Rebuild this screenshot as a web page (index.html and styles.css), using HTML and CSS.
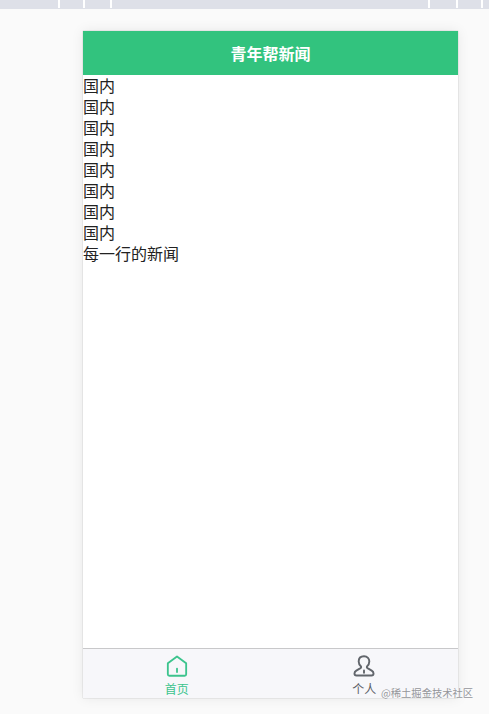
FILE: index.html
```html
<!DOCTYPE html>
<html lang="zh-CN">
  <head>
    <meta charset="utf-8" />
    <meta name="viewport" content="width=device-width, initial-scale=1" />
    <title>青年帮新闻</title>
    <link rel="stylesheet" href="styles.css">
  </head>
  <body>
    <div class="top-strip"></div>

    <!-- Phone preview -->
    <div class="phone">
      <div class="nav-bar">青年帮新闻</div>

      <div class="content">
        <div>国内</div>
        <div>国内</div>
        <div>国内</div>
        <div>国内</div>
        <div>国内</div>
        <div>国内</div>
        <div>国内</div>
        <div>国内</div>
        <div>每一行的新闻</div>
      </div>

      <div class="tab-bar">
        <div class="tab tab-active">
          <svg class="tab-icon" viewBox="0 0 24 24" fill="none" stroke="#3cc48d" stroke-width="2" stroke-linejoin="round" stroke-linecap="round">
            <path d="M12 1.6 L22 9 V21 Q22 22.6 20.4 22.6 H3.6 Q2 22.6 2 21 V9 Z" />
            <path d="M12 14.8 V18.6" />
          </svg>
          <span class="tab-label">首页</span>
        </div>
        <div class="tab">
          <svg class="tab-icon" viewBox="0 0 24 24" fill="none" stroke="#62666c" stroke-width="2.1" stroke-linejoin="round" stroke-linecap="round">
            <path d="M12 1.4 C8.2 1.4 6.2 4 6.2 7.2 C6.2 9.8 7.6 11.6 8.8 12.6 C9.2 13.6 8.4 14.4 6.8 15.2 L3.6 17 C2.4 17.7 1.6 18.8 1.6 20.2 C1.6 21.6 2.4 22.4 3.8 22.4 H20.2 C21.6 22.4 22.4 21.6 22.4 20.2 C22.4 18.8 21.6 17.7 20.4 17 L17.2 15.2 C15.6 14.4 14.8 13.6 15.2 12.6 C16.4 11.6 17.8 9.8 17.8 7.2 C17.8 4 15.8 1.4 12 1.4 Z" />
            <path d="M12 16.8 V19.4" />
          </svg>
          <span class="tab-label">个人</span>
        </div>
      </div>
    </div>

    <div class="watermark">@稀土掘金技术社区</div>
  </body>
</html>
```

FILE: styles.css
```css
body {
  margin: 0;
  height: 714px;
  overflow: hidden;
  position: relative;
  background: #fafafa;
  font-family: "Noto Sans CJK SC", "Noto Sans", sans-serif;
  color: #222;
}

.top-strip {
  height: 9px;
  background-color: #dee0e8;
  background-image: linear-gradient(90deg,
    transparent 58px, #fff 58px, #fff 60px,
    transparent 60px, transparent 83px, #fff 83px, #fff 85px,
    transparent 85px, transparent 110px, #fff 110px, #fff 112px,
    transparent 112px, transparent 428px, #fff 428px, #fff 430px,
    transparent 430px, transparent 456px, #fff 456px, #fff 458px,
    transparent 458px, transparent 481px, #fff 481px, #fff 483px,
    transparent 483px);
  background-size: 100% 8px;
  background-repeat: no-repeat;
}

.phone {
  width: 375px;
  height: 667px;
  margin: 22px 0 0 83px;
  display: flex;
  flex-direction: column;
  background: #fff;
  box-shadow: 0 0 12px rgba(0, 0, 0, 0.08), 0 0 1px rgba(0, 0, 0, 0.3);
}

.nav-bar {
  height: 44px;
  flex: none;
  display: flex;
  align-items: center;
  justify-content: center;
  background: #32c37e;
  color: #fff;
  font-size: 16px;
  font-weight: bold;
}

.content {
  flex: 1;
  font-size: 16px;
  line-height: 21px;
}

.tab-bar {
  height: 49px;
  flex: none;
  display: flex;
  border-top: 1px solid #c8c8ca;
  background: #f7f7fa;
}

.tab {
  flex: 1;
  display: flex;
  flex-direction: column;
  align-items: center;
  padding-top: 6px;
  color: #5c6066;
}

.tab-active {
  color: #3cc48d;
}

.tab-icon {
  width: 22px;
  height: 22px;
  display: block;
}

.tab-label {
  font-size: 12px;
  line-height: 16px;
  margin-top: 4px;
}

.watermark {
  position: absolute;
  left: 381px;
  top: 685px;
  font-size: 10.3px;
  line-height: 15px;
  color: #94969a;
  text-shadow: 0 0 2px #fff;
  white-space: nowrap;
}
```
